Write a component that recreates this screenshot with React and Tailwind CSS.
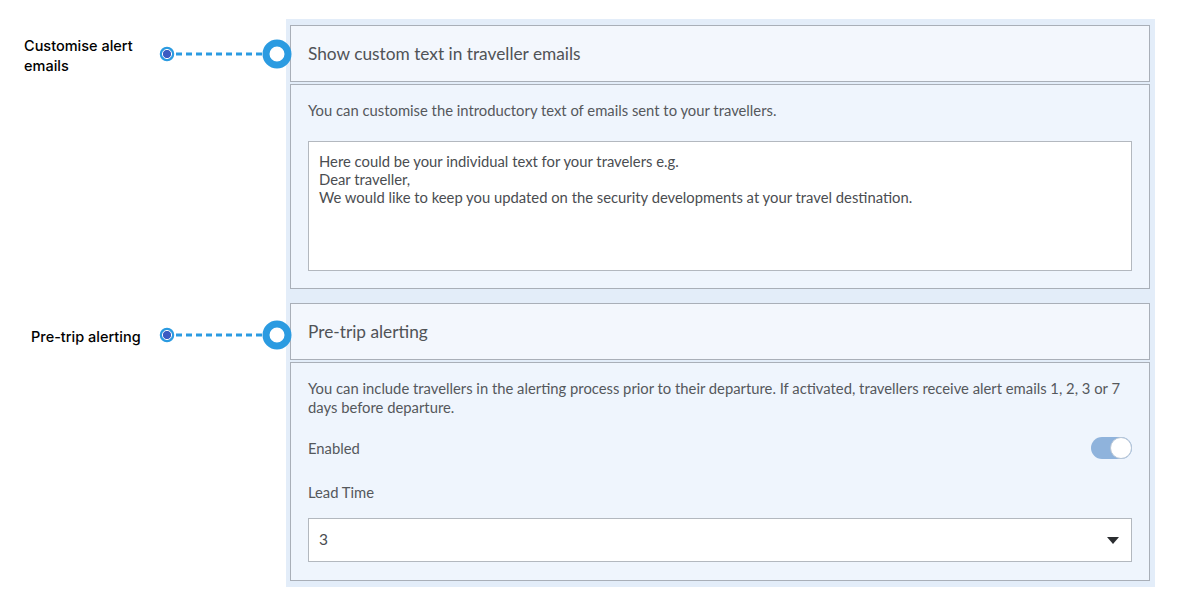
import { useState } from "react";

function Connector() {
  return (
    <svg width="136" height="32" viewBox="0 0 136 32" className="shrink-0">
      <circle cx="9" cy="16" r="6" fill="#3d5cc2" stroke="#2b9be1" strokeWidth="2.5" />
      <circle cx="9" cy="16" r="4.6" fill="none" stroke="#ffffff" strokeWidth="1" />
      <line x1="18" y1="16" x2="106" y2="16" stroke="#2b9be1" strokeWidth="3" strokeDasharray="6 4" />
      <circle cx="119" cy="16" r="11" fill="#ffffff" stroke="#2b9be1" strokeWidth="7" />
    </svg>
  );
}

function Callout({ lines, textLeft, shift }) {
  return (
    <div className={`absolute top-1/2 -translate-y-1/2 left-[-133px] ${shift}`}>
      <Connector />
      <div
        className="absolute top-1/2 -translate-y-1/2 mt-[2px] text-[14.5px] leading-[20px] font-medium text-black whitespace-nowrap font-['Inter',sans-serif]"
        style={{ left: textLeft }}
      >
        {lines.map((l) => (
          <div key={l}>{l}</div>
        ))}
      </div>
    </div>
  );
}

function CardHeader({ title, children }) {
  return (
    <div className="relative h-[57px] border-[1.5px] border-[#a9afb8] bg-[#f3f7fd] flex items-center pl-[17px]">
      <span className="text-[17.3px] text-[#505357]">{title}</span>
      {children}
    </div>
  );
}

export default function App() {
  const [enabled, setEnabled] = useState(true);
  return (
    <div className="w-[1179px] h-[605px] bg-white pt-[19px] font-['Lato',sans-serif]">
      <div className="ml-[286px] w-[869px] bg-[#e3edf9] pt-[6px] pl-[4px] pr-[5px] pb-[6px]">
        <CardHeader title="Show custom text in traveller emails">
          <Callout lines={["Customise alert", "emails"]} textLeft="-134px" shift="" />
        </CardHeader>
        <div className="mt-[2px] border-[1.5px] border-[#a9afb8] bg-[#eff5fd] px-[17px] pt-[15px] pb-[17px]">
          <p className="text-[14.8px] leading-[20px] text-[#55585c]">
            You can customise the introductory text of emails sent to your travellers.
          </p>
          <div className="mt-[21px] h-[130px] border-[1.5px] border-[#b3b8bf] bg-white px-[10px] pt-[10px] text-[14.8px] leading-[18px] text-[#4a4d51]">
            <div>Here could be your individual text for your travelers e.g.</div>
            <div>Dear traveller,</div>
            <div>We would like to keep you updated on the security developments at your travel destination.</div>
          </div>
        </div>

        <div className="mt-[14px]">
          <CardHeader title="Pre-trip alerting">
            <Callout lines={["Pre-trip alerting"]} textLeft="-127px" shift="mt-[3px]" />
          </CardHeader>
        </div>
        <div className="mt-[2px] border-[1.5px] border-[#a9afb8] bg-[#eff5fd] px-[17px] pt-[16px] pb-[18px]">
          <p className="text-[14.8px] leading-[19px] text-[#55585c] whitespace-nowrap">
            You can include travellers in the alerting process prior to their departure. If activated, travellers receive alert emails 1, 2, 3 or 7
            <br />
            days before departure.
          </p>
          <div className="mt-[20px] flex items-center justify-between h-[22px]">
            <span className="text-[14.8px] text-[#55585c]">Enabled</span>
            <button
              onClick={() => setEnabled(!enabled)}
              className="relative w-[41px] h-[22px] rounded-full bg-[#8fb3dc]"
            >
              <span className="absolute right-0 top-0 w-[22px] h-[22px] rounded-full bg-white border border-[#b8c6d6]" />
            </button>
          </div>
          <div className="mt-[23px] text-[14.8px] leading-[20px] text-[#55585c]">Lead Time</div>
          <div className="mt-[16px] h-[44px] border-[1.5px] border-[#b3b8bf] bg-white flex items-center justify-between pl-[10px] pr-[12px]">
            <span className="text-[15.5px] text-[#4a4d51]">3</span>
            <svg width="12" height="7" viewBox="0 0 12 7">
              <path d="M0 0 L12 0 L6 7 Z" fill="#2b2d30" />
            </svg>
          </div>
        </div>
      </div>
    </div>
  );
}
